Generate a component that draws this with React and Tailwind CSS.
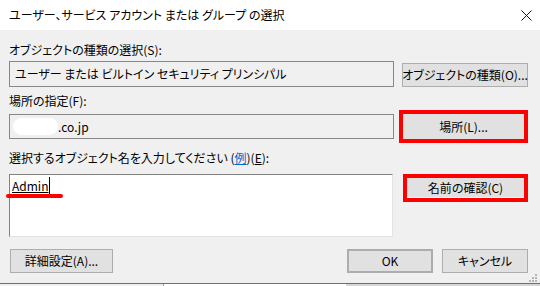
import React from 'react'

const font = { fontFamily: '"Noto Sans CJK JP", "Noto Sans", sans-serif' }

function WinButton({ children, className = '' }) {
  return (
    <div className={`flex shrink-0 items-center justify-center whitespace-nowrap border border-[#adadad] bg-[#e1e1e1] text-[12px] text-black ${className}`}>
      {children}
    </div>
  )
}

export default function App() {
  return (
    <div
      className="relative h-[286px] w-[540px] overflow-hidden bg-[#f0f0f0] leading-[16px] text-black [font-feature-settings:'palt']"
      style={font}
    >
      {/* title bar */}
      <div className="flex h-[30px] items-center justify-between bg-white pl-[9px] pr-[8px]">
        <div className="text-[12px]">ユーザー、サービス アカウント または グループ の選択</div>
        <svg width="11" height="11" viewBox="0 0 11 11">
          <path d="M0.5 0.5 L10.5 10.5 M10.5 0.5 L0.5 10.5" stroke="#111" strokeWidth="1" />
        </svg>
      </div>

      <div className="pl-[9px] pr-[12px]">
        <div className="mt-[12px] h-[16px] text-[12px]">オブジェクトの種類の選択(S):</div>
        <div className="mt-[3px] flex items-end gap-[8px]">
          <div className="flex h-[26px] w-[385px] shrink-0 items-center border border-[#878787] bg-[#f0f0f0] pl-[5px] text-[12px]">
            ユーザー または ビルトイン セキュリティ プリンシパル
          </div>
          <WinButton className="h-[24px] w-[126px]">オブジェクトの種類(O)...</WinButton>
        </div>

        <div className="mt-[6px] h-[16px] text-[12px]">場所の指定(F):</div>
        <div className="mt-[1px] flex items-center gap-[5px]">
          <div className="flex h-[25px] w-[385px] shrink-0 items-center border border-[#878787] bg-[#f0f0f0] pl-[3px] text-[12px]">
            <span className="h-[17px] w-[45px] rounded-full bg-white" />
            <span>.co.jp</span>
          </div>
          <div className="h-[33px] w-[129px] shrink-0 border-[4px] border-[#ff0000]">
            <WinButton className="h-full w-full border-0">場所(L)...</WinButton>
          </div>
        </div>

        <div className="mt-[7px] h-[16px] text-[12px]">
          選択するオブジェクト名を入力してください (<span className="text-[#0066cc] underline">例</span>)(<span className="underline">E</span>):
        </div>
        <div className="mt-[8px] flex items-start gap-[10px]">
          <div className="relative h-[63px] w-[384px] shrink-0 border border-b-[#e3e3e3] border-l-[#828282] border-r-[#e3e3e3] border-t-[#828282] bg-white pl-[2px] pt-[2px] text-[12px]">
            <div className="flex items-center">
              <span className="underline">Admin</span>
              <span className="ml-px h-[17px] w-px bg-black" />
            </div>
          </div>
          <div className="h-[28px] w-[125px] shrink-0 border-[4px] border-[#ff0000]">
            <WinButton className="h-full w-full border-0 border-b border-b-[#f4f4f4]">名前の確認(C)</WinButton>
          </div>
        </div>

        <div className="mt-[12px] flex items-center">
          <WinButton className="ml-px h-[24px] w-[103px]">詳細設定(A)...</WinButton>
          <div className="flex-1" />
          <WinButton className="h-[24px] w-[86px] border-2 border-[#0078d7]">OK</WinButton>
          <WinButton className="ml-[9px] h-[24px] w-[86px]">キャンセル</WinButton>
        </div>
      </div>

      {/* red underline annotation */}
      <div className="absolute left-[6px] top-[194px] h-[4px] w-[57px] rounded-full bg-[#ff0000]" />

      {/* resize grip */}
      <svg className="absolute right-[2px] top-[274px]" width="10" height="9" viewBox="0 0 10 9">
        <rect x="7" y="0" width="2" height="2" fill="#b5b5b5" />
        <rect x="4" y="3" width="2" height="2" fill="#b5b5b5" />
        <rect x="7" y="3" width="2" height="2" fill="#b5b5b5" />
        <rect x="1" y="6" width="2" height="2" fill="#b5b5b5" />
        <rect x="4" y="6" width="2" height="2" fill="#b5b5b5" />
        <rect x="7" y="6" width="2" height="2" fill="#b5b5b5" />
      </svg>

      {/* window below */}
      <div className="absolute left-0 top-[283px] flex h-[3px] w-[540px] flex-col">
        <div className="h-px bg-[#6e6e6e]" />
        <div className="flex flex-1">
          <div className="w-[163px] bg-[#f0f0f0]" />
          <div className="w-[183px] border-l border-[#9a9a9a] bg-white" />
          <div className="flex-1 bg-[#d6d6d6]" />
        </div>
      </div>
    </div>
  )
}
